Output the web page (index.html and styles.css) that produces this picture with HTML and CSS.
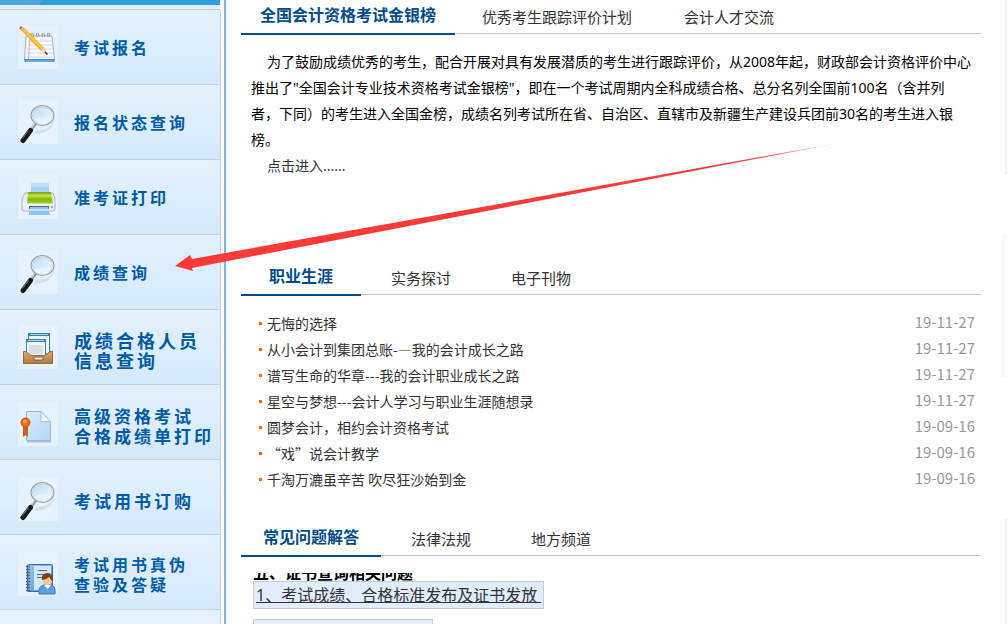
FILE: index.html
```
<!DOCTYPE html>
<html lang="zh-CN">

<head>
    <meta charset="UTF-8">
    <meta name="viewport" content="width=device-width, initial-scale=1.0">
    <title>全国会计资格评价网</title>
    <link rel="stylesheet" href="styles.css">
</head>

<body>
    <!-- shared icon shapes -->
    <svg class="defs" aria-hidden="true">
        <defs>
            <linearGradient id="lens" x1="0" y1="0" x2="1" y2="1">
                <stop offset="0" stop-color="#b9dcfa" />
                <stop offset="1" stop-color="#f2faff" />
            </linearGradient>
            <linearGradient id="green" x1="0" y1="0" x2="0" y2="1">
                <stop offset="0" stop-color="#6f9f0c" />
                <stop offset="0.3" stop-color="#c4e545" />
                <stop offset="0.6" stop-color="#7fb80e" />
                <stop offset="1" stop-color="#9fd020" />
            </linearGradient>
            <linearGradient id="wood" x1="0" y1="0" x2="0" y2="1">
                <stop offset="0" stop-color="#d9ab70" />
                <stop offset="1" stop-color="#b07a3d" />
            </linearGradient>
            <linearGradient id="sheet" x1="0" y1="0" x2="1" y2="1">
                <stop offset="0" stop-color="#d9ebfb" />
                <stop offset="1" stop-color="#b5d7f5" />
            </linearGradient>
            <linearGradient id="cover" x1="0" y1="0" x2="1" y2="1">
                <stop offset="0" stop-color="#9cc8ef" />
                <stop offset="1" stop-color="#4a90d0" />
            </linearGradient>
            <symbol id="magnifier" viewBox="0 0 40 44">
                <path d="M18 30 Q34 30 36 18 L36 22 Q32 34 16 34Z" fill="#c5d3e0" opacity="0.6" />
                <path d="M13 30 L18 23" stroke="#8a9299" stroke-width="3" />
                <path d="M13 29 L17 23" stroke="#e2e6e9" stroke-width="1" />
                <path d="M12.500 30.500 L5 40.500" stroke="#17191b" stroke-width="5" stroke-linecap="round" />
                <path d="M10.500 30.500 L4.500 38.500" stroke="#777c80" stroke-width="1" />
                <ellipse cx="24.500" cy="15.500" rx="11" ry="9.500" fill="url(#lens)" stroke="#999fa5" stroke-width="2" />
                <ellipse cx="24.500" cy="15.500" rx="10.500" ry="9" fill="none" stroke="#e8eaeb" stroke-width="1" />
                <path d="M16 20 Q22 15 34 19 Q31 24 24.500 24 Q19 24 16 20Z" fill="#eaf6ff" opacity="0.7" />
            </symbol>
        </defs>
    </svg>

    <div class="page">
        <nav class="sidebar">
            <div class="sidebar-top"></div>
            <a class="service" href="#">
                <svg class="icon" viewBox="0 0 40 44">
                    <path d="M8 11 H34 L36.500 35 H6.500Z" fill="#fdfdff" stroke="#8fb7e2" />
                    <path d="M6.500 34 H36.500 V37 H6.500Z" fill="#4b86d0" />
                    <path d="M8 36 H35" stroke="#9bc4ee" stroke-width="1" />
                    <path d="M10 16 H34 M10 20 H34 M9 24 H35 M9 28 H35 M9 32 H35" stroke="#cdd6e4" />
                    <path d="M12 12 L10.500 34" stroke="#f0a5a5" />
                    <path d="M13.500 12 L13 8 M15.500 12 L15 8 M19 12 L18.500 8 M21 12 L20.500 8 M24.500 12 L24 8 M26.500 12 L26 8 M30 12 L29.500 8 M32 12 L31 8" stroke="#8b9299" />
                    <path d="M4 6 L6.500 3 L26 23 L29 29 L22.500 25.500Z" fill="#f7a91c" />
                    <path d="M5.500 4.500 L24.500 24" stroke="#ffd65a" stroke-width="1.500" />
                    <path d="M22.500 25.500 L26 22.500 L29 29Z" fill="#f5d9a8" />
                    <path d="M27 27 L29.500 29.500" stroke="#333" stroke-width="1.500" />
                    <path d="M1 3 L3 1 L6 3.500 L4 6Z" fill="#bf7350" />
                    <path d="M3 5 L5.500 2.500" stroke="#c8d0d6" stroke-width="1.500" />
                </svg>
                <span class="service-name">考试报名</span>
            </a>
            <a class="service" href="#">
                <svg class="icon"><use href="#magnifier" /></svg>
                <span class="service-name">报名状态查询</span>
            </a>
            <a class="service" href="#">
                <svg class="icon" viewBox="0 0 40 44">
                    <path d="M13 8 H31 V20 H13Z" fill="#a9cffa" />
                    <path d="M13 8 H31 V12 H13Z" fill="#bfdcfd" />
                    <path d="M7 18 H35 L37 24 V34 Q37 36 35 36 H6 Q4 36 4 34 V24Z" fill="#e9ebed" stroke="#b2b8be" />
                    <path d="M10 17 H33 L35 29 H9Z" fill="url(#green)" />
                    <path d="M5 29.500 H36" stroke="#fff" stroke-width="2" />
                    <path d="M11 31 H31 V34 H11Z" fill="#55606b" />
                    <path d="M12 32 H30 L32 40 H11Z" fill="#8fc0f5" />
                    <path d="M12 35 H31" stroke="#c4defb" stroke-width="2" />
                    <circle cx="34" cy="32" r="1" fill="#7db52a" />
                </svg>
                <span class="service-name">准考证打印</span>
            </a>
            <a class="service" href="#">
                <svg class="icon"><use href="#magnifier" /></svg>
                <span class="service-name">成绩查询</span>
            </a>
            <a class="service" href="#">
                <svg class="icon" viewBox="0 0 40 44">
                    <path d="M10.500 8.500 H31.500 V29 H10.500Z" fill="#eef4f8" stroke="#2f83b5" />
                    <path d="M10 8 H32 V11 H10Z" fill="#2f83b5" />
                    <path d="M12 9.500 H30" stroke="#a7d9ef" />
                    <path d="M8.500 14.500 H27.500 V31 H8.500Z" fill="#f2f5f8" stroke="#2f83b5" />
                    <path d="M8 14 H28 V17 H8Z" fill="#2f83b5" />
                    <path d="M10 15.500 H26" stroke="#a7d9ef" />
                    <path d="M11 20 H25 V29 H11Z" fill="#d9dfe5" />
                    <path d="M5.500 26.500 H8 L13 30.500 H27 L32 26.500 H34.500 V38.500 H5.500Z" fill="url(#wood)" stroke="#986b3c" />
                    <rect x="16" y="32" width="9" height="3" rx="1" fill="#eee" stroke="#76634d" />
                </svg>
                <span class="service-name large">成绩合格人员<br>信息查询</span>
            </a>
            <a class="service lower" href="#">
                <svg class="icon" viewBox="0 0 40 44">
                    <path d="M9 39.500 H33" stroke="#98a8b8" stroke-width="2" opacity="0.7" />
                    <path d="M8.500 9.500 H23 L32.500 19.500 V38.500 H8.500Z" fill="url(#sheet)" stroke="#90b9e0" />
                    <path d="M23 9.500 V19.500 H32.500Z" fill="#f7fbff" stroke="#9dc3e8" />
                    <path d="M5 23 H10 V35 L7.500 33 L5 35Z" fill="#dd5b14" />
                    <circle cx="7.500" cy="20.500" r="4.500" fill="#ee6d1a" stroke="#ca4b0c" />
                    <circle cx="7" cy="19.500" r="2" fill="#ff9b4c" />
                </svg>
                <span class="service-name medium">高级资格考试<br>合格成绩单打印</span>
            </a>
            <a class="service lower" href="#">
                <svg class="icon"><use href="#magnifier" /></svg>
                <span class="service-name medium">考试用书订购</span>
            </a>
            <a class="service lower" href="#">
                <svg class="icon" viewBox="0 0 40 44">
                    <rect x="9.500" y="12.500" width="25" height="27" rx="1" fill="url(#cover)" stroke="#326eaa" />
                    <rect x="16" y="14" width="17" height="24" fill="#d4e8fa" />
                    <path d="M20 18.500 H29 M19 22.500 H28 M19 25.500 H25" stroke="#4c6f94" />
                    <path d="M8 14.500 H12 M8 17.500 H12 M8 20.500 H12 M8 23.500 H12 M8 26.500 H12 M8 29.500 H12 M8 32.500 H12 M8 35.500 H12 M8 38.500 H12" stroke="#526270" stroke-width="1.500" />
                    <path d="M21 42 Q20 34 26 33 H33 Q38 34 37 42Z" fill="#5b9fe3" stroke="#3b78b8" />
                    <path d="M26 33 L29.500 37 L33 33Z" fill="#fff" />
                    <circle cx="29.500" cy="28" r="5" fill="#f2c79a" />
                    <path d="M24 28 Q23 21 29.500 21 Q36 21 35 30 Q33 28 31 25 Q28 28 24 28Z" fill="#75451c" />
                </svg>
                <span class="service-name">考试用书真伪<br>查验及答疑</span>
            </a>
            <div class="sidebar-rest"></div>
        </nav>

        <main class="content">
            <section class="panel">
                <div class="tabs">
                    <a class="tab xwide active" href="#">全国会计资格考试金银榜</a>
                    <a class="tab xwide-link" href="#">优秀考生跟踪评价计划</a>
                    <a class="tab wide" href="#">会计人才交流</a>
                </div>
                <div class="panel-body intro">
                    <p>为了鼓励成绩优秀的考生，配合开展对具有发展潜质的考生进行跟踪评价，从2008年起，财政部会计资格评价中心推出了"全国会计专业技术资格考试金银榜"，即在一个考试周期内全科成绩合格、总分名列全国前100名（含并列者，下同）的考生进入全国金榜，成绩名列考试所在省、自治区、直辖市及新疆生产建设兵团前30名的考生进入银榜。</p>
                    <p><a class="enter" href="#">点击进入......</a></p>
                </div>
            </section>

            <section class="panel">
                <div class="tabs">
                    <a class="tab active" href="#">职业生涯</a>
                    <a class="tab" href="#">实务探讨</a>
                    <a class="tab" href="#">电子刊物</a>
                </div>
                <ul class="panel-body news">
                    <li><a href="#">无悔的选择</a><span class="date">19-11-27</span></li>
                    <li><a href="#">从小会计到集团总账-—我的会计成长之路</a><span class="date">19-11-27</span></li>
                    <li><a href="#">谱写生命的华章---我的会计职业成长之路</a><span class="date">19-11-27</span></li>
                    <li><a href="#">星空与梦想---会计人学习与职业生涯随想录</a><span class="date">19-11-27</span></li>
                    <li><a href="#">圆梦会计，相约会计资格考试</a><span class="date">19-09-16</span></li>
                    <li><a href="#">“戏”说会计教学</a><span class="date">19-09-16</span></li>
                    <li><a href="#">千淘万漉虽辛苦 吹尽狂沙始到金</a><span class="date">19-09-16</span></li>
                </ul>
            </section>

            <section class="panel">
                <div class="tabs">
                    <a class="tab wide active" href="#">常见问题解答</a>
                    <a class="tab" href="#">法律法规</a>
                    <a class="tab" href="#">地方频道</a>
                </div>
                <div class="panel-body faq">
                    <h3 class="faq-title"><span>五、证书查询相关问题</span></h3>
                    <a class="faq-item" href="#">1、考试成绩、合格标准发布及证书发放&nbsp;</a>
                    <div class="faq-next"></div>
                </div>
            </section>
        </main>

        <aside class="side">
            <div class="side-box first"></div>
            <div class="side-box second"></div>
            <div class="side-box third"></div>
        </aside>

        <!-- red pointer to the score query entry -->
        <svg class="arrow" viewBox="0 0 664 130" aria-hidden="true">
            <defs>
                <linearGradient id="fade" x1="0" y1="0" x2="1" y2="0">
                    <stop offset="0.9" stop-color="#fd3a38" />
                    <stop offset="1" stop-color="#fd3a38" stop-opacity="0.4" />
                </linearGradient>
            </defs>
            <path d="M0 124 L15 113 L17 117 L663 1 L17 126 L18 129Z" fill="url(#fade)" />
        </svg>
    </div>
</body>

</html>
```
FILE: styles.css
```
* {
    box-sizing: border-box;
}

body {
    margin: 0;
    background-color: #fff;
    color: #333;
    font-family: "Noto Sans", "Noto Sans CJK SC", sans-serif;
    font-size: 14px;
    line-height: 26px;
    text-spacing-trim: space-all;
}

a {
    color: inherit;
    text-decoration: none;
}

.defs {
    position: absolute;
    width: 0;
    height: 0;
}

.page {
    position: relative;
    display: flex;
    height: 100vh;
    overflow: hidden;
}

/* left menu */
.sidebar {
    display: flex;
    flex-direction: column;
    flex: none;
    width: 226px;
    padding-right: 3px;
    border-right: 2px solid #7bb3e2;
}

.sidebar-top {
    flex: none;
    height: 10px;
    margin-right: 1px;
    border-bottom: 1px solid #bcd0e8;
    background: linear-gradient(120deg, #4fa6dc 36px, #2e9fd9 37px) no-repeat 0 0 / 100% 5px #e3f0fb;
}

.service {
    display: flex;
    align-items: center;
    flex: none;
    height: 75px;
    padding-left: 18px;
    gap: 16px;
    border-right: 1px solid #bcd0e8;
    border-bottom: 1px solid #bcd0e8;
    background: linear-gradient(#e4f1fc, #d5e9fb);
}

.service.lower {
    padding-top: 4px;
}

.icon {
    flex: none;
    width: 40px;
    height: 44px;
    background-color: #e6f2fe;
}

.service-name {
    padding-top: 2px;
    color: #005ba6;
    font-size: 16px;
    font-weight: bold;
    line-height: 20px;
    letter-spacing: 3px;
    white-space: nowrap;
}

.service-name.medium {
    padding-top: 6px;
    font-size: 17px;
}

.service-name.large {
    padding-top: 8px;
    font-size: 18px;
}

.sidebar-rest {
    flex: 1;
    border-right: 1px solid #bcd0e8;
    background-color: #e4f1fc;
}

/* middle column */
.content {
    flex: 1;
    padding: 0 20px 0 15px;
}

.panel {
    margin-bottom: 30px;
}

.tabs {
    display: flex;
    height: 34px;
    border-bottom: 1px solid #c5c5c5;
}

.tab {
    width: 120px;
    height: 35px;
    font-size: 15px;
    line-height: 35px;
    text-align: center;
    white-space: nowrap;
}

.tab.wide {
    width: 140px;
}

.tab.xwide {
    width: 214px;
}

.tab.xwide-link {
    width: 204px;
}

.tab.active {
    border-bottom: 2px solid #004b8a;
    color: #004b8a;
    font-size: 16px;
    font-weight: bold;
    line-height: 30px;
}

.panel-body {
    min-height: 182px;
    margin: 15px 0 0;
}

.intro {
    padding: 0 9px 0 10px;
    color: #000;
}

.intro p {
    margin: 0;
    text-indent: 16px;
}

.enter {
    color: #333;
}

.news {
    padding: 0 6px 0 18px;
    font-family: "Noto Sans CJK SC", sans-serif;
    list-style: none;
}

.news li {
    display: flex;
    align-items: center;
}

.news li::before {
    content: "";
    width: 3px;
    height: 3px;
    margin-right: 5px;
    background-color: #f60;
}

.date {
    margin-left: auto;
    color: #999;
    font-size: 15px;
    line-height: 24px;
    padding-bottom: 2px;
}

.faq {
    display: flex;
    flex-direction: column;
    align-items: flex-start;
    padding: 2px 12px 0;
}

/* the list is scrolled, so only the foot of the title shows */
.faq-title {
    display: flex;
    align-items: flex-end;
    height: 8px;
    margin: 0;
    overflow: hidden;
    color: #000;
    font-size: 16px;
    line-height: 16px;
}

.faq-item {
    padding: 0 2px;
    border: 1px solid #c8ccd2;
    background-color: #e0edff;
    font-size: 16px;
    text-decoration: underline;
}

.faq-next {
    width: 180px;
    height: 28px;
    margin-top: 10px;
    border: 1px solid #c8ccd2;
    background-color: #e0edff;
}

/* edge of the right column */
.side {
    display: flex;
    flex-direction: column;
    align-items: flex-end;
    flex: none;
    width: 6px;
}

.side-box {
    width: 2px;
    background-color: #f0f0f0;
}

.side-box.first {
    height: 174px;
}

.side-box.second {
    width: 6px;
    height: 142px;
    margin: 61px 0 142px;
    background-color: #f9f9f9;
}

.side-box.third {
    flex: 1;
}

.arrow {
    position: absolute;
    top: 142px;
    left: 175px;
    width: 664px;
    height: 130px;
    pointer-events: none;
}
```
